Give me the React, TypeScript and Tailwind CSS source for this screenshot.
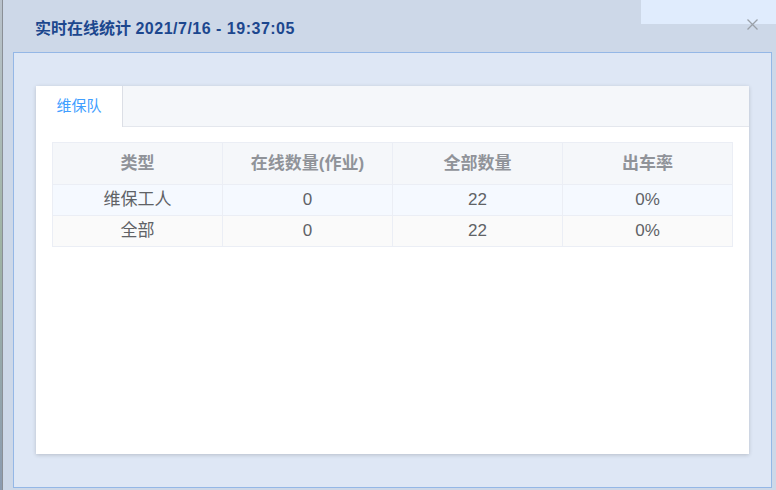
import React from "react";

const rows = [
  { type: "维保工人", online: "0", total: "22", rate: "0%" },
  { type: "全部", online: "0", total: "22", rate: "0%" },
];

const headers = ["类型", "在线数量(作业)", "全部数量", "出车率"];

export default function App() {
  return (
    <div
      className="relative flex h-[490px] w-[776px] overflow-hidden bg-[#cdd8e8]"
      style={{ fontFamily: '"Liberation Sans", "Noto Sans CJK SC", sans-serif' }}
    >
      {/* lighter block overlapping the top right corner */}
      <div className="absolute right-0 top-0 h-[24px] w-[135px] bg-[#e0ecfd]" />

      {/* map peeking out on the left */}
      <div className="w-[3px] shrink-0 bg-gradient-to-b from-[#b9c2cc] via-[#9fb3a4] to-[#8b9bb0] border-r border-[#8a8f96]" />

      <div className="relative flex min-w-0 flex-1 flex-col">
        <div className="flex h-[52px] items-center justify-between pl-[32px] pr-[18px] pt-[6px]">
          <h1 className="text-[16px] font-bold text-[#1c478e]">
            实时在线统计 <span className="tracking-[0.5px]">2021/7/16 - 19:37:05</span>
          </h1>
          <svg width="11" height="11" viewBox="0 0 11 11" className="mt-[-10px] text-[#9aa0a8]">
            <path d="M0.5 0.5L10.5 10.5M10.5 0.5L0.5 10.5" stroke="currentColor" strokeWidth="1.3" />
          </svg>
        </div>

        <div className="ml-[10px] mr-[4px] mb-[2px] flex-1 border border-[#94b7e6] bg-[#dee7f5] px-[22px] pt-[33px] pb-[33px]">
          <div className="flex h-full flex-col bg-white shadow-[0_1px_4px_rgba(0,0,0,0.18)]">
            <div className="flex h-[41px] border-b border-[#e4e7ed] bg-[#f5f7fa]">
              <div className="mb-[-1px] flex w-[87px] items-center justify-center border-r border-[#dcdfe6] bg-white text-[15px] text-[#409eff]">
                维保队
              </div>
            </div>

            <div className="px-[16px] pt-[15px]">
              <table className="w-full table-fixed border-collapse text-center text-[17px]">
                <thead>
                  <tr className="h-[42px] bg-[#f5f7fa]">
                    {headers.map((h) => (
                      <th key={h} className="border border-[#ebeef5] font-bold text-[#909399]">
                        {h}
                      </th>
                    ))}
                  </tr>
                </thead>
                <tbody>
                  {rows.map((r, i) => (
                    <tr key={r.type} className={i === 0 ? "h-[31px] bg-[#f5f9ff]" : "h-[31px] bg-[#fafafa]"}>
                      <td className="border border-[#ebeef5] text-[#606266]">{r.type}</td>
                      <td className="border border-[#ebeef5] text-[#606266]">{r.online}</td>
                      <td className="border border-[#ebeef5] text-[#606266]">{r.total}</td>
                      <td className="border border-[#ebeef5] text-[#606266]">{r.rate}</td>
                    </tr>
                  ))}
                </tbody>
              </table>
            </div>
          </div>
        </div>
      </div>
    </div>
  );
}
